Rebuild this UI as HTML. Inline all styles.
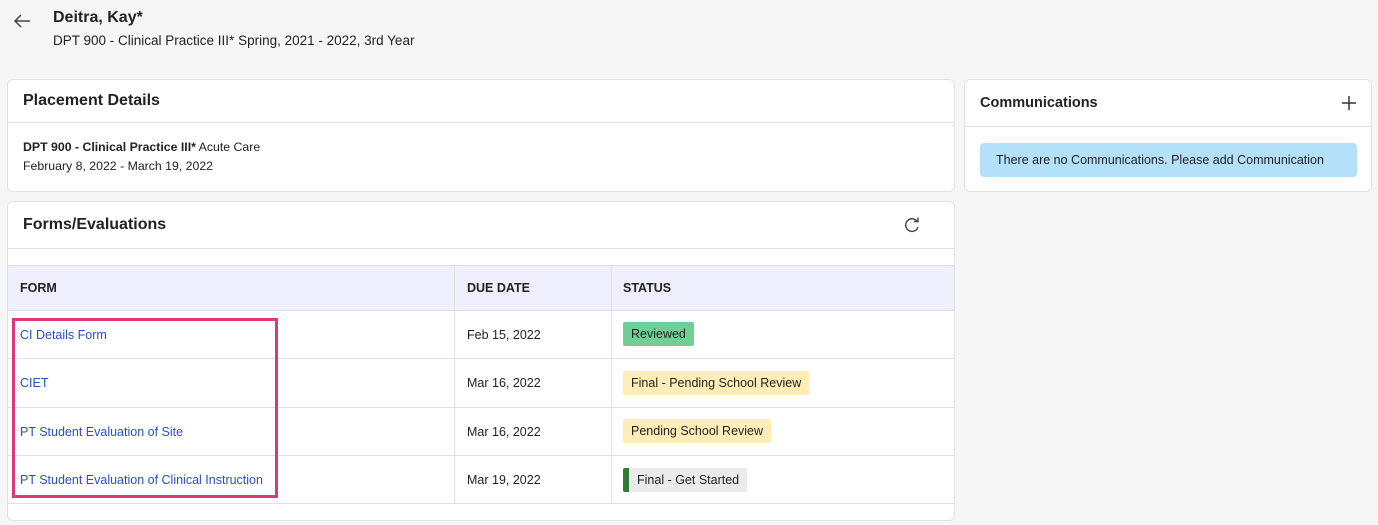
<!DOCTYPE html>
<html><head><meta charset="utf-8"><style>
*{box-sizing:border-box;margin:0;padding:0}
body{width:1378px;height:525px;background:#f6f6f6;font-family:"Liberation Sans",sans-serif;color:#222;position:relative;overflow:hidden}
.a{position:absolute;white-space:nowrap}
.card{position:absolute;background:#fff;border:1px solid #e2e2e2;border-radius:6px}
.h{font-weight:bold;font-size:16px;color:#222}
.hr{position:absolute;left:0;right:0;height:1px;background:#e2e2e2}
.link{color:#2a4fc4;font-size:12.5px}
.td{font-size:12.5px;color:#222}
.badge{position:absolute;height:24px;line-height:24px;padding:0 8px;font-size:12.5px;border-radius:2px;color:#222}
</style></head><body>
<svg class="a" style="left:12px;top:13px" width="20" height="16" viewBox="0 0 20 16"><path d="M18 8H3M9 2L3 8l6 6" fill="none" stroke="#444" stroke-width="1.5"/></svg>
<div class="a" style="left:53px;top:9px;font-size:16px;font-weight:bold">Deitra, Kay*</div>
<div class="a" style="left:53px;top:33px;font-size:13.5px">DPT 900 - Clinical Practice III* Spring, 2021 - 2022, 3rd Year</div>

<div class="card" style="left:7px;top:79px;width:948px;height:113px">
 <div class="a h" style="left:15px;top:12px">Placement Details</div>
 <div class="hr" style="top:42px"></div>
 <div class="a" style="left:15px;top:60px;font-size:12.3px"><b>DPT 900 - Clinical Practice III*</b> Acute Care</div>
 <div class="a" style="left:15px;top:79px;font-size:12.3px">February 8, 2022 - March 19, 2022</div>
</div>

<div class="card" style="left:964px;top:79px;width:408px;height:113px">
 <div class="a h" style="left:15px;top:15px;font-size:14.5px">Communications</div>
 <svg class="a" style="left:376px;top:15px" width="16" height="16"><path d="M8 1v14M1 8h14" stroke="#333" stroke-width="1.5"/></svg>
 <div class="hr" style="top:46px"></div>
 <div class="a" style="left:15px;top:63px;width:377px;height:34px;background:#b3e1fa;border-radius:4px;font-size:12.5px;line-height:34px;padding-left:16px">There are no Communications. Please add Communication</div>
</div>

<div class="card" style="left:7px;top:201px;width:948px;height:320px">
 <div class="a h" style="left:15px;top:14px">Forms/Evaluations</div>
 <svg class="a" style="left:895px;top:14px" width="18" height="18" viewBox="0 0 18 18"><path d="M14.5 6A6.3 6.3 0 1 0 15 11" fill="none" stroke="#444" stroke-width="1.4"/><path d="M11 5.5h4V1.5" fill="none" stroke="#444" stroke-width="1.4"/></svg>
 <div class="hr" style="top:46px"></div>
 <div class="a" style="left:0;top:63px;width:946px;height:46px;background:#eeeefc;border-top:1px solid #dcdcec;border-bottom:1px solid #dcdcec"></div>
 <div class="a" style="left:446px;top:63px;width:1px;height:239px;background:#e2e2e2"></div>
 <div class="a" style="left:603px;top:63px;width:1px;height:239px;background:#e2e2e2"></div>
 <div class="a" style="left:12px;top:79px;font-size:12.5px;font-weight:bold">FORM</div>
 <div class="a" style="left:459px;top:79px;font-size:12.5px;font-weight:bold">DUE DATE</div>
 <div class="a" style="left:615px;top:79px;font-size:12.5px;font-weight:bold">STATUS</div>
 <div class="hr" style="top:156px"></div>
 <div class="hr" style="top:205px"></div>
 <div class="hr" style="top:253px"></div>
 <div class="hr" style="top:301px"></div>

 <div class="a link" style="left:12px;top:126px">CI Details Form</div>
 <div class="a td" style="left:459px;top:126px">Feb 15, 2022</div>
 <div class="badge" style="left:615px;top:120px;background:#6fcf97">Reviewed</div>

 <div class="a link" style="left:12px;top:174px">CIET</div>
 <div class="a td" style="left:459px;top:174px">Mar 16, 2022</div>
 <div class="badge" style="left:615px;top:169px;background:#feedb6">Final - Pending School Review</div>

 <div class="a link" style="left:12px;top:223px">PT Student Evaluation of Site</div>
 <div class="a td" style="left:459px;top:223px">Mar 16, 2022</div>
 <div class="badge" style="left:615px;top:217px;background:#feedb6">Pending School Review</div>

 <div class="a link" style="left:12px;top:271px">PT Student Evaluation of Clinical Instruction</div>
 <div class="a td" style="left:459px;top:271px">Mar 19, 2022</div>
 <div class="badge" style="left:615px;top:266px;background:#ebebeb;border-left:6px solid #2e7d32;padding-left:8px">Final - Get Started</div>
</div>

<div class="a" style="left:12px;top:318px;width:266px;height:180px;border:3px solid #e0377a"></div>
</body></html>
